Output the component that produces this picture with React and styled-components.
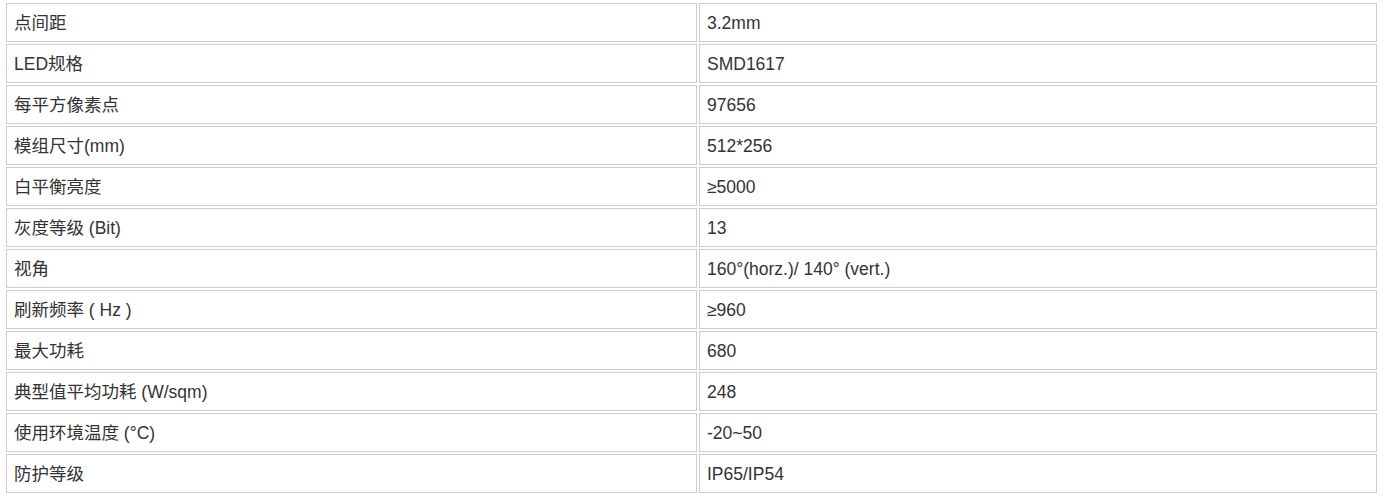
import React from 'react'
import styled, { createGlobalStyle } from 'styled-components'

const GlobalStyle = createGlobalStyle`
  html, body {
    margin: 0;
    padding: 0;
    background: #fff;
  }
`;

const specs = [
  ['点间距', '3.2mm'],
  ['LED规格', 'SMD1617'],
  ['每平方像素点', '97656'],
  ['模组尺寸(mm)', '512*256'],
  ['白平衡亮度', '≥5000'],
  ['灰度等级 (Bit)', '13'],
  ['视角', '160°(horz.)/ 140° (vert.)'],
  ['刷新频率 ( Hz )', '≥960'],
  ['最大功耗', '680'],
  ['典型值平均功耗 (W/sqm)', '248'],
  ['使用环境温度 (°C)', '-20~50'],
  ['防护等级', 'IP65/IP54'],
]

const Page = styled.div`
  padding: 1px 0 0 4px;
`;

const SpecTable = styled.div`
  display: grid;
  grid-template-columns: 691px 678px;
  gap: 2px;
  padding: 2px;
  width: max-content;
`;

const Cell = styled.div`
  box-sizing: border-box;
  height: 39px;
  border: 1px solid #cccccc;
  padding: 1px 7px 0;
  line-height: 36px;
  font-family: "Liberation Sans", "Noto Sans CJK SC", sans-serif;
  font-size: 17.5px;
  color: #333;
  white-space: pre;
  overflow: hidden;
`;

function App() {
  return (
    <Page>
      <GlobalStyle />
      <SpecTable>
        {specs.map(([label, value]) => (
          <React.Fragment key={label}>
            <Cell>{label}</Cell>
            <Cell>{value}</Cell>
          </React.Fragment>
        ))}
      </SpecTable>
    </Page>
  )
}

export default App
